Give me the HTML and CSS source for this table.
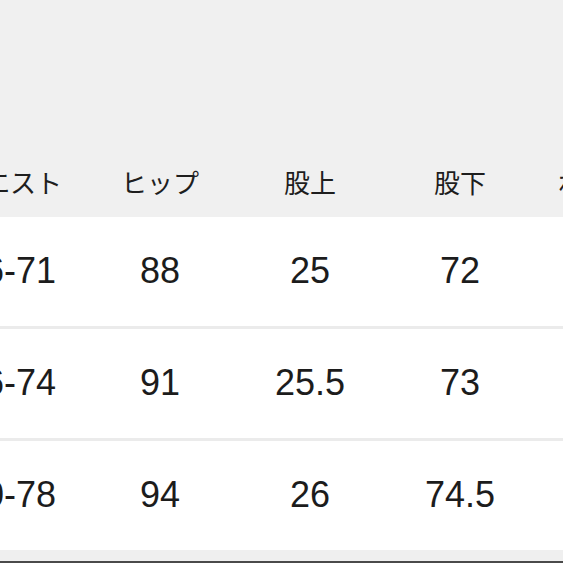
FILE: index.html
```html
<!DOCTYPE html>
<html lang="ja">
<head>
<meta charset="utf-8">
<link rel="stylesheet" href="styles.css">
</head>
<body>
<div class="page">
  <div class="table">
    <div class="row head">
      <div class="cell">ウエスト</div>
      <div class="cell">ヒップ</div>
      <div class="cell">股上</div>
      <div class="cell">股下</div>
      <div class="cell">わたり幅</div>
    </div>
    <div class="row body sep">
      <div class="cell">66-71</div>
      <div class="cell">88</div>
      <div class="cell">25</div>
      <div class="cell">72</div>
      <div class="cell">30</div>
    </div>
    <div class="row body sep">
      <div class="cell">66-74</div>
      <div class="cell">91</div>
      <div class="cell">25.5</div>
      <div class="cell">73</div>
      <div class="cell">31</div>
    </div>
    <div class="row body">
      <div class="cell">70-78</div>
      <div class="cell">94</div>
      <div class="cell">26</div>
      <div class="cell">74.5</div>
      <div class="cell">32</div>
    </div>
  </div>
  <div class="foot"></div>
</div>
</body>
</html>
```

FILE: styles.css
```css
html, body {
  margin: 0;
  padding: 0;
  background: #f0f0f0;
  overflow: hidden;
}
.page {
  width: 563px;
  height: 563px;
  overflow: hidden;
  display: flex;
  flex-direction: column;
  padding-top: 149px;
  box-sizing: border-box;
}
.table {
  display: flex;
  flex-direction: column;
}
.row {
  display: grid;
  grid-template-columns: repeat(5, 150px);
  margin-left: -65px;
  width: 750px;
}
.head {
  height: 68px;
  background: #f0f0f0;
  color: #1e1e1e;
  font-family: "Noto Sans CJK JP", sans-serif;
  font-size: 26px;
}
.head .cell {
  padding-bottom: 2px;
}
.body {
  height: 109px;
  background: #ffffff;
  color: #1c1c1c;
  font-family: "Liberation Sans", Arial, sans-serif;
  font-size: 36px;
}
.body .cell {
  padding-bottom: 2px;
}
.sep {
  border-bottom: 3px solid #ebebeb;
}
.cell {
  display: flex;
  align-items: center;
  justify-content: center;
  white-space: nowrap;
  line-height: 1;
}
.foot {
  height: 11px;
  background: #efefef;
  border-bottom: 2px solid #4a4a4a;
}
```
